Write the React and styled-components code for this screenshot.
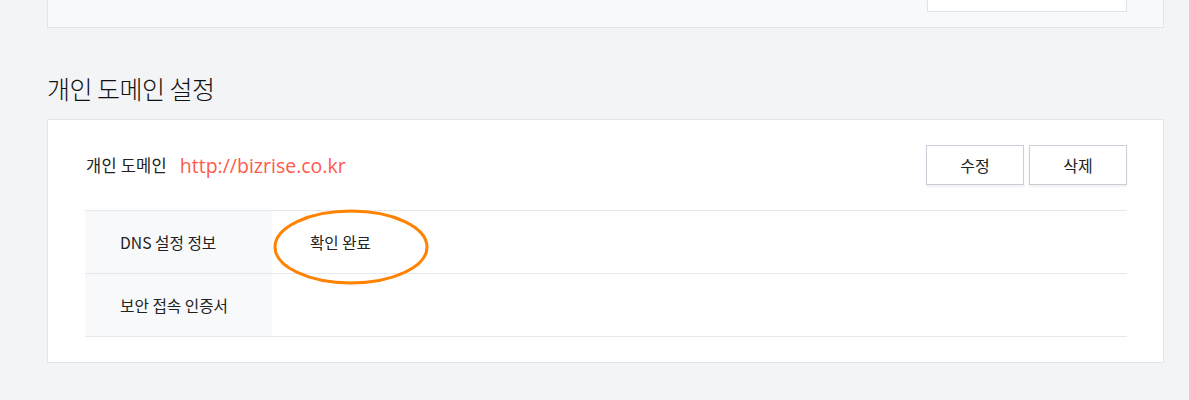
import React from 'react';
import styled, { createGlobalStyle } from 'styled-components';

const GlobalStyle = createGlobalStyle`
    html, body {
        margin: 0;
        padding: 0;
        background: #f3f4f6;
        font-family: "Noto Sans CJK KR", "Noto Sans", sans-serif;
        color: #222;
    }
`;

const PageStyle = styled.div`
    display: flow-root;
    padding: 0 25px 0 47px;
`;

const TopCardStyle = styled.div`
    margin-top: -60px;
    height: 88px;
    box-sizing: border-box;
    background: #f8f9fb;
    border: 1px solid #e1e4e9;
    display: flex;
    justify-content: flex-end;
    align-items: flex-end;
    padding: 0 36px 15px 0;
`;

const GhostBox = styled.div`
    width: 198px;
    height: 40px;
    background: #fff;
    border: 1px solid #dfe2e8;
`;

const SectionTitle = styled.h2`
    margin: 0;
    padding: 43px 0 14px;
    font-size: 25px;
    font-weight: 300;
    line-height: 34px;
    color: #111;
    letter-spacing: -0.5px;
`;

const CardStyle = styled.div`
    background: #fff;
    border: 1px solid #e1e4e9;
    padding: 25px 36px 25px 37px;
`;

const HeaderRow = styled.div`
    display: flex;
    align-items: center;
    justify-content: space-between;
    height: 40px;
    margin-bottom: 25px;
`;

const DomainInfo = styled.div`
    display: flex;
    align-items: center;
    padding-left: 1px;
`;

const DomainLabel = styled.span`
    font-size: 16.5px;
    color: #222;
    margin-right: 13px;
    letter-spacing: 0.2px;
`;

const DomainLink = styled.a`
    font-family: "Open Sans", "Noto Sans", sans-serif;
    font-size: 19.5px;
    color: #ff5a4b;
    text-decoration: none;
`;

const ButtonGroup = styled.div`
    display: flex;
    gap: 5px;
`;

const Button = styled.button`
    width: 98px;
    height: 40px;
    background: #fff;
    border: 1px solid #c9ced8;
    box-shadow: 0 2px 2px rgba(0, 0, 0, 0.06);
    font-family: "Noto Sans CJK KR", "Noto Sans", sans-serif;
    font-size: 16px;
    color: #222;
    cursor: pointer;
    padding: 0;
`;

const InfoTable = styled.div`
    border-top: 1px solid #e6e8ec;
`;

const InfoRow = styled.div`
    display: grid;
    grid-template-columns: 187px 1fr;
    height: 63px;
    border-bottom: 1px solid #e6e8ec;
    box-sizing: border-box;
`;

const InfoLabel = styled.div`
    background: #f8f9fb;
    display: flex;
    align-items: center;
    padding-left: 35px;
    font-size: 15.7px;
    color: #222;
`;

const InfoValue = styled.div`
    position: relative;
    display: flex;
    align-items: center;
    padding-left: 38px;
    font-size: 15.6px;
    color: #222;
`;

const Highlight = styled.svg`
    position: absolute;
    left: 1px;
    top: -2px;
    overflow: visible;
    pointer-events: none;
`;

export default function App() {
    return (
        <>
            <GlobalStyle />
            <PageStyle>
                <TopCardStyle>
                    <GhostBox />
                </TopCardStyle>
                <SectionTitle>개인 도메인 설정</SectionTitle>
                <CardStyle>
                    <HeaderRow>
                        <DomainInfo>
                            <DomainLabel>개인 도메인</DomainLabel>
                            <DomainLink href="#">http://bizrise.co.kr</DomainLink>
                        </DomainInfo>
                        <ButtonGroup>
                            <Button>수정</Button>
                            <Button>삭제</Button>
                        </ButtonGroup>
                    </HeaderRow>
                    <InfoTable>
                        <InfoRow>
                            <InfoLabel>DNS 설정 정보</InfoLabel>
                            <InfoValue>
                                확인 완료
                                <Highlight width="156" height="76">
                                    <ellipse cx="78" cy="38" rx="76" ry="36" fill="none" stroke="#ff8200" strokeWidth="3" />
                                </Highlight>
                            </InfoValue>
                        </InfoRow>
                        <InfoRow>
                            <InfoLabel>보안 접속 인증서</InfoLabel>
                            <InfoValue />
                        </InfoRow>
                    </InfoTable>
                </CardStyle>
            </PageStyle>
        </>
    );
}
